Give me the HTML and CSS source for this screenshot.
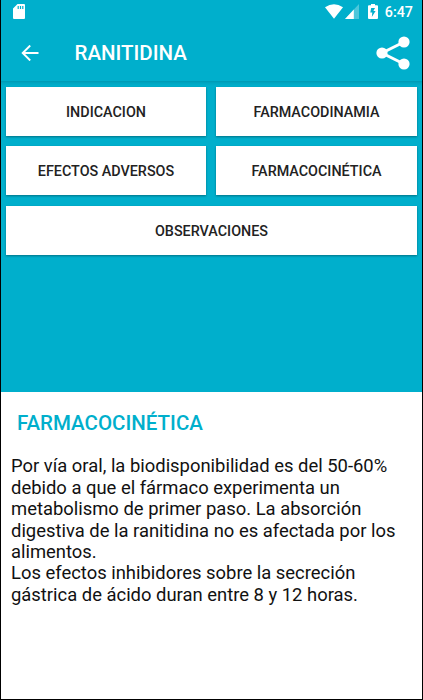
FILE: index.html
```html
<!DOCTYPE html>
<html lang="es">
<head>
    <meta charset="UTF-8">
    <meta name="viewport" content="width=device-width, initial-scale=1.0">
    <title>Ranitidina</title>
    <link rel="stylesheet" href="styles.css">
</head>
<body>
    <header>
        <div class="estado">
            <svg class="sd" width="12" height="15" viewBox="0 0 12 15">
                <path fill="#fff" fill-rule="evenodd" d="M4.5 0H11a1 1 0 0 1 1 1v13a1 1 0 0 1-1 1H1a1 1 0 0 1-1-1V4.5zM4.6 2v3h1.2V2zM6.9 2v3h1.2V2zM9.2 2v3h1.2V2z"/>
            </svg>
            <svg class="wifi" width="18" height="15" viewBox="0 0 18 15">
                <path fill="#fff" d="M0 3.2Q9-2.6 18 3.2L9 14.8z"/>
            </svg>
            <svg class="senal" width="14" height="15" viewBox="0 0 14 15">
                <path fill="#fff" fill-opacity=".3" d="M14 0v15H0z"/>
                <path fill="#fff" d="M8.8 5.6V15H0z"/>
            </svg>
            <svg class="bateria" width="10" height="15" viewBox="0 0 10 15">
                <path fill="#fff" fill-rule="evenodd" d="M3 0h4v1.2h2q1 0 1 1V14q0 1-1 1H1q-1 0-1-1V2.2q0-1 1-1h2zM3.2 4L2.3 8.5h2L3.8 13 7.6 7H5.4L7 4z"/>
            </svg>
            <span class="hora">6:47</span>
        </div>
        <div class="barra">
            <svg class="volver" width="18" height="16" viewBox="0 0 18 16">
                <path fill="none" stroke="#fff" stroke-width="1.9" d="M17.5 8H1.5M9.2 .5L1.7 8l7.5 7.5"/>
            </svg>
            <h1>RANITIDINA</h1>
            <svg class="compartir" width="34" height="34" viewBox="0 0 34 34">
                <path fill="none" stroke="#fff" stroke-width="3" d="M28 6L6 17l22 11"/>
                <circle fill="#fff" cx="28" cy="6" r="5.6"/>
                <circle fill="#fff" cx="6" cy="17" r="5.6"/>
                <circle fill="#fff" cx="28" cy="28" r="5.6"/>
            </svg>
        </div>
    </header>
    <nav>
        <button>INDICACION</button>
        <button>FARMACODINAMIA</button>
        <button>EFECTOS ADVERSOS</button>
        <button>FARMACOCINÉTICA</button>
        <button class="ancho">OBSERVACIONES</button>
    </nav>
    <main>
        <h2>FARMACOCINÉTICA</h2>
        <p>Por vía oral, la biodisponibilidad es del 50-60% debido a que el fármaco experimenta un metabolismo de primer paso. La absorción digestiva de la ranitidina no es afectada por los alimentos.</p>
        <p>Los efectos inhibidores sobre la secreción gástrica de ácido duran entre 8 y 12 horas.</p>
    </main>
</body>
</html>
```
FILE: styles.css
```css
* {
    padding: 0;
    margin: 0;
    box-sizing: border-box;
    font-family: Roboto, "Liberation Sans", sans-serif;
}
:root {
    --celeste: #00afcc;
}
body {
    height: 700px;
    display: flex;
    flex-direction: column;
    border: 1px solid #000;
    border-top: none;
    background-color: #fff;
    overflow: hidden;
}
svg {
    display: block;
    flex: none;
}
header {
    height: 81px;
    background-color: var(--celeste);
}
.estado {
    height: 24px;
    display: flex;
    align-items: center;
    padding: 0 9px 0 12px;
    color: #fff;
}
.estado svg {
    margin-bottom: 1px;
}
.wifi {
    margin-left: auto;
}
.senal {
    margin-left: 2px;
}
.bateria {
    margin: 0 7px 0 9px;
}
.hora {
    font-size: 14.3px;
    font-weight: 500;
    line-height: 24px;
}
.barra {
    height: 57px;
    display: flex;
    align-items: center;
    padding: 0 12px 0 19.5px;
}
.barra h1 {
    flex: 1;
    margin-left: 36px;
    color: #fff;
    font-size: 20.5px;
    font-weight: 500;
}
nav {
    height: 311px;
    display: grid;
    grid-template-columns: 200px 201px;
    grid-template-rows: 49px 49px 49px;
    gap: 10.49px 10px;
    padding: 6px 5px 0;
    background: linear-gradient(#0098b2, #00a6c2 2px, var(--celeste) 5px);
}
nav button {
    padding-top: 1.5px;
    border: none;
    background-color: #fff;
    color: #222;
    font-size: 14.35px;
    font-weight: 500;
    box-shadow: 0 1px 2px rgba(0, 0, 0, .35);
}
nav .ancho {
    grid-column: span 2;
}
main {
    padding: 18px 10px 0;
}
main h2 {
    margin: 0 0 19.4px 6px;
    color: var(--celeste);
    font-size: 20.5px;
    font-weight: 500;
    line-height: 26px;
}
main p {
    color: #111;
    font-size: 18.42px;
    line-height: 21.4px;
}
```
